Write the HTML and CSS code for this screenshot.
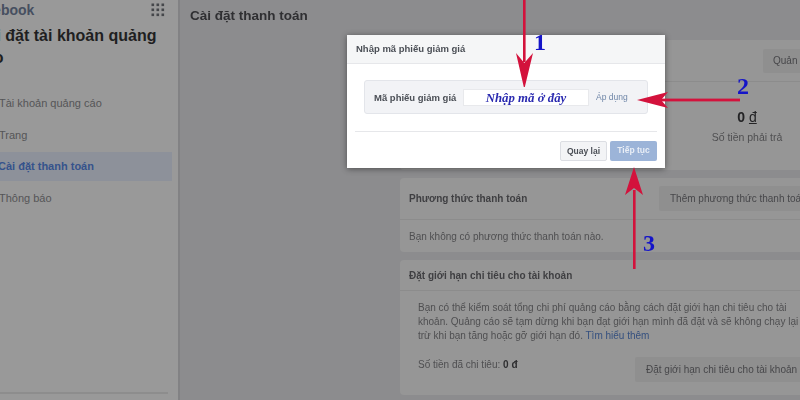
FILE: index.html
```html
<!DOCTYPE html>
<html>
<head>
    <title>Cài đặt thanh toán</title>
    <link rel="stylesheet" href="styles.css">
</head>
<body>
    <div class="page">
        <div class="sidebar">
            <div class="side-top">
                <span class="brand">Facebook</span>
                <svg class="apps" width="14" height="14" viewBox="0 0 14 14">
                    <g fill="#45474b">
                        <rect x="0.5" y="0.5" width="2.6" height="2.6"/><rect x="5.5" y="0.5" width="2.6" height="2.6"/><rect x="10.5" y="0.5" width="2.6" height="2.6"/>
                        <rect x="0.5" y="5.5" width="2.6" height="2.6"/><rect x="5.5" y="5.5" width="2.6" height="2.6"/><rect x="10.5" y="5.5" width="2.6" height="2.6"/>
                        <rect x="0.5" y="10.5" width="2.6" height="2.6"/><rect x="5.5" y="10.5" width="2.6" height="2.6"/><rect x="10.5" y="10.5" width="2.6" height="2.6"/>
                    </g>
                </svg>
            </div>
            <h1 class="side-title">Cài đặt tài khoản quảng cáo</h1>
            <div class="side-menu">
                <div class="side-item">Tài khoản quảng cáo</div>
                <div class="side-item">Trang</div>
                <div class="side-item active">Cài đặt thanh toán</div>
                <div class="side-item">Thông báo</div>
            </div>
            <div class="side-line"></div>
        </div>
        <div class="main">
            <h2 class="main-title">Cài đặt thanh toán</h2>
            <div class="cards">
                <div class="card card-summary">
                    <div class="card-head head-tall">
                        <span></span>
                        <div class="btn btn-manage">Quản lý</div>
                    </div>
                    <div class="summary">
                        <div class="amount">0 <u>đ</u></div>
                        <div class="amount-label">Số tiền phải trả</div>
                    </div>
                </div>
                <div class="card card-method">
                    <div class="card-head head-tall">
                        <span class="card-title">Phương thức thanh toán</span>
                        <div class="btn btn-add">Thêm phương thức thanh toán</div>
                    </div>
                    <div class="card-row">Bạn không có phương thức thanh toán nào.</div>
                </div>
                <div class="card card-limit">
                    <div class="card-head">
                        <span class="card-title">Đặt giới hạn chi tiêu cho tài khoản</span>
                    </div>
                    <div class="limit-body">
                        <p class="limit-text">Bạn có thể kiểm soát tổng chi phí quảng cáo bằng cách đặt giới hạn chi tiêu cho tài khoản. Quảng cáo sẽ tạm dừng khi bạn đạt giới hạn mình đã đặt và sẽ không chạy lại trừ khi bạn tăng hoặc gỡ giới hạn đó. <span class="link">Tìm hiểu thêm</span></p>
                        <div class="limit-foot">
                            <span>Số tiền đã chi tiêu: <b>0 đ</b></span>
                            <div class="btn btn-limit">Đặt giới hạn chi tiêu cho tài khoản</div>
                        </div>
                    </div>
                </div>
            </div>
        </div>
    </div>

    <!-- coupon dialog -->
    <div class="dialog">
        <div class="dialog-head">Nhập mã phiếu giảm giá</div>
        <div class="dialog-body">
            <div class="coupon">
                <span class="coupon-label">Mã phiếu giảm giá</span>
                <div class="coupon-input">Nhập mã ở đây</div>
                <span class="coupon-apply">Áp dụng</span>
            </div>
        </div>
        <div class="dialog-foot">
            <div class="dialog-btn back">Quay lại</div>
            <div class="dialog-btn next">Tiếp tục</div>
        </div>
    </div>

    <!-- red arrows and numbers drawn on top of the screenshot -->
    <svg class="arrows" width="800" height="400" viewBox="0 0 800 400">
        <g fill="#d3123c" stroke="none">
            <rect x="523" y="0" width="2.6" height="62"/>
            <path d="M516 53 L524.3 63 L533 53 L524.8 87 L523.8 87 Z"/>
            <rect x="655" y="98.6" width="85" height="2.8"/>
            <path d="M637 100 L668 92 L661 100 L668 108 Z"/>
            <rect x="633" y="190" width="2.6" height="79"/>
            <path d="M625 195 L634 167 L643 195 L634 188 Z"/>
        </g>
    </svg>
    <span class="num num-1">1</span>
    <span class="num num-2">2</span>
    <span class="num num-3">3</span>
</body>
</html>
```

FILE: styles.css
```css
html, body {
    margin: 0;
    padding: 0;
    height: 400px;
    overflow: hidden;
    font-family: "Liberation Sans", Arial, sans-serif;
    background: #8c8c8e;
}

.page {
    display: flex;
    width: 800px;
    height: 400px;
    filter: blur(0.5px);
}

/* left column, its left edge is cut off in the picture */
.sidebar {
    width: 180px;
    height: 400px;
    flex-shrink: 0;
    box-sizing: border-box;
    background: #999999;
    border-right: 2px solid #828284;
    color: #444;
    overflow: hidden;
}

.side-top {
    display: flex;
    justify-content: space-between;
    align-items: center;
    height: 20px;
    margin-left: -31px;
    padding-right: 13px;
}

.brand {
    font-size: 14px;
    font-weight: bold;
    color: #464f60;
}

.side-title {
    margin: 5px 0 0 -24px;
    width: 190px;
    font-size: 16px;
    line-height: 22px;
    font-weight: bold;
    color: #1f1f21;
}

.side-menu {
    margin-top: 18px;
}

.side-item {
    height: 32px;
    line-height: 32px;
    margin-right: 6px;
    font-size: 11px;
    color: #555557;
    text-indent: -1px;
}

.side-item.active {
    height: 29px;
    line-height: 28px;
    margin: 1px 6px 1px 0;
    background: #8d919a;
    color: #35538c;
    font-weight: bold;
    text-indent: -2px;
}

.side-line {
    height: 2px;
    margin-top: 178px;
    margin-right: 10px;
    background: #8d8d8d;
}

.main {
    flex: 1;
    min-width: 0;
    padding: 7px 0 0 10px;
}

.main-title {
    margin: 0;
    font-size: 13.5px;
    line-height: 18px;
    font-weight: bold;
    color: #2f2f32;
}

.cards {
    display: flex;
    flex-direction: column;
    gap: 8px;
    width: 440px;
    margin: 15px 0 0 210px;
}

.card {
    background: #969696;
    border-radius: 4px;
    overflow: hidden;
    color: #4f4f51;
    font-size: 10px;
}

.card-summary {
    height: 130px;
}

.card-method {
    height: 74px;
}

.card-limit {
    height: 135px;
}

.card-head {
    display: flex;
    justify-content: space-between;
    align-items: center;
    height: 31px;
    box-sizing: border-box;
    padding: 0 9px;
    border-bottom: 1px solid #8c8c8c;
}

.head-tall {
    height: 42px;
}

.card-title {
    font-size: 10px;
    font-weight: bold;
    color: #3f3f42;
}

.btn {
    flex-shrink: 0;
    box-sizing: border-box;
    background: #8f8f8f;
    border-radius: 2px;
    color: #47474a;
    font-size: 10px;
    white-space: nowrap;
}

.btn-manage {
    width: 60px;
    height: 24px;
    line-height: 24px;
    margin-right: 8px;
    padding-left: 10px;
}

.summary {
    width: 120px;
    margin: 26px 0 0 287px;
    text-align: center;
}

.amount {
    font-size: 14px;
    line-height: 18px;
    font-weight: bold;
    color: #232325;
}

.amount u {
    font-weight: normal;
}

.amount-label {
    margin-top: 4px;
    font-size: 10.5px;
    line-height: 14px;
}

.btn-add {
    width: 190px;
    height: 25px;
    line-height: 25px;
    margin-right: -18px;
    padding-left: 11px;
}

.card-row {
    padding: 10px 9px;
    line-height: 13px;
}

.limit-body {
    padding: 10px 0 0 18px;
}

.limit-text {
    width: 384px;
    margin: 0;
    line-height: 14px;
}

.link {
    color: #35507f;
}

.limit-foot {
    display: flex;
    justify-content: space-between;
    align-items: flex-start;
    margin-top: 16px;
}

.limit-foot b {
    color: #2f2f31;
}

.btn-limit {
    width: 190px;
    height: 25px;
    line-height: 25px;
    margin-top: -2px;
    margin-right: 15px;
    padding-left: 11px;
}

/* dialog */
.dialog {
    position: absolute;
    left: 347px;
    top: 35px;
    width: 318px;
    height: 133px;
    background: #fff;
    box-shadow: 0 1px 6px rgba(0, 0, 0, 0.45);
    filter: blur(0.4px);
}

.dialog-head {
    height: 28px;
    line-height: 27px;
    padding-left: 9px;
    background: #f5f6f7;
    border-bottom: 1px solid #e6e7ea;
    font-size: 9.5px;
    font-weight: bold;
    color: #4b4f56;
}

.dialog-body {
    padding: 16px 17px 0;
}

.coupon {
    display: flex;
    align-items: center;
    height: 34px;
    box-sizing: border-box;
    padding-left: 9px;
    background: #f2f3f6;
    border: 1px solid #e3e5ea;
    border-radius: 3px;
}

.coupon-label {
    width: 89px;
    font-size: 9.5px;
    font-weight: bold;
    color: #4b4f56;
}

.coupon-input {
    width: 126px;
    height: 17px;
    line-height: 16px;
    background: #fff;
    border: 1px solid #e8e9ec;
    box-sizing: border-box;
    text-align: center;
    font-family: "Liberation Serif", serif;
    font-size: 12.8px;
    font-style: italic;
    font-weight: bold;
    color: #2a2ab0;
}

.coupon-apply {
    margin-left: 7px;
    font-size: 8.5px;
    color: #6f86a8;
}

.dialog-foot {
    display: flex;
    justify-content: flex-end;
    gap: 3px;
    margin: 17px 8px 0;
    padding-top: 9px;
    border-top: 1px solid #e6e7ea;
}

.dialog-btn {
    width: 47px;
    height: 20px;
    line-height: 19px;
    box-sizing: border-box;
    border-radius: 2px;
    font-size: 8.5px;
    font-weight: bold;
    text-align: center;
}

.back {
    background: #f3f4f6;
    border: 1px solid #dcdee3;
    color: #4b4f56;
}

.next {
    background: #9cb4d8;
    color: #e9eef6;
}

/* annotations */
.arrows {
    position: absolute;
    left: 0;
    top: 0;
    filter: blur(0.4px);
}

.num {
    position: absolute;
    font-family: "Liberation Serif", serif;
    font-weight: bold;
    font-size: 24px;
    line-height: 24px;
    color: #1414c8;
}

.num-1 {
    left: 534px;
    top: 30px;
}

.num-2 {
    left: 737px;
    top: 74px;
}

.num-3 {
    left: 643px;
    top: 231px;
}
```
